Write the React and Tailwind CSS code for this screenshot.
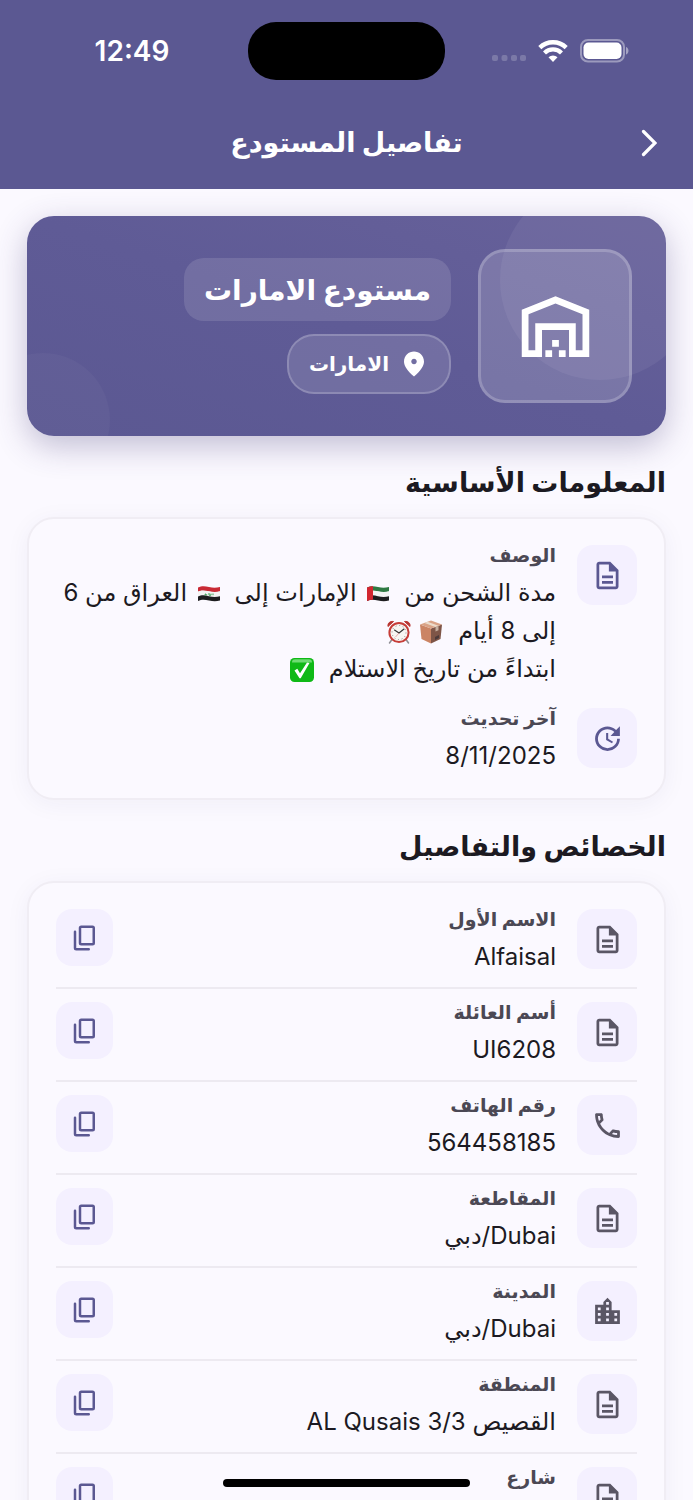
import React from 'react';
import {
  MdOutlineDescription,
  MdOutlineWarehouse,
  MdOutlinePhone,
  MdUpdate,
  MdLocationCity
} from 'react-icons/md';

const fields = [
  { id: 'first', label: 'الاسم الأول', value: 'Alfaisal', icon: MdOutlineDescription },
  { id: 'last', label: 'أسم العائلة', value: 'UI6208', icon: MdOutlineDescription },
  { id: 'phone', label: 'رقم الهاتف', value: '564458185', icon: MdOutlinePhone },
  { id: 'province', label: 'المقاطعة', value: 'Dubai/دبي', icon: MdOutlineDescription },
  { id: 'city', label: 'المدينة', value: 'Dubai/دبي', icon: MdLocationCity },
  { id: 'area', label: 'المنطقة', value: 'القصيص AL Qusais 3/3', icon: MdOutlineDescription },
  { id: 'street', label: 'شارع', value: '', icon: MdOutlineDescription }
];

/* Small inline pictures used inside the description */
const UaeFlag = () => (
  <svg viewBox="0 0 22 16" role="img" aria-label="الإمارات" className="inline-block w-[22px] h-4 ms-2 me-1 align-middle">
    <path d="M0 1.500C4-.5 7 0 11 1s7 1 11 0v4.600c-4 1-7 .8-11 0S4 4 0 5.900z" fill="#2f7a43" />
    <path d="M0 5.500C4 3.700 7 4.500 11 5.300s7 1 11 0v5c-4 1-7 .8-11 0s-7-1.600-11 .3z" fill="#f3f3f3" />
    <path d="M0 10.500c4-1.900 7-1.200 11-.3s7 1 11 0v4.300c-4 1-7 .8-11 0s-7-1.400-11 .5z" fill="#1d1d1f" />
    <path d="M0 1.500C2 .5 4 .2 6 .2v13.500c-2 0-4 .4-6 1.300z" fill="#d22630" />
  </svg>
);

const IraqFlag = () => (
  <svg viewBox="0 0 22 16" role="img" aria-label="العراق" className="inline-block w-[22px] h-4 ms-2 me-1 align-middle">
    <path d="M0 1.500C4-.5 7 0 11 1s7 1 11 0v4.600c-4 1-7 .8-11 0S4 4 0 5.900z" fill="#c92a35" />
    <path d="M0 5.500C4 3.700 7 4.500 11 5.300s7 1 11 0v5c-4 1-7 .8-11 0s-7-1.600-11 .3z" fill="#f3f3f3" />
    <path d="M0 10.500c4-1.900 7-1.200 11-.3s7 1 11 0v4.300c-4 1-7 .8-11 0s-7-1.400-11 .5z" fill="#1d1d1f" />
    <path d="M6.500 8.800h2.700M7.500 7.600v1M11 7v2.200h2V7.600M15 7.500v1.700" stroke="#3e9b55" strokeWidth="1" fill="none" />
  </svg>
);

const PackageIcon = () => (
  <svg viewBox="0 0 24 24" role="img" aria-label="طرد" className="inline-block w-6 h-6 ms-2 me-1 align-middle">
    <path d="M1 4.500 12 8.500v15L2.500 19z" fill="#cb8464" />
    <path d="M23 4.500 12 8.500v15l9.500-4.500z" fill="#7e5547" />
    <path d="M1 4.500 12 .5l11 4-11 4z" fill="#d9a286" />
    <path d="M5.500 2.900 16.500 6.900l3-1.100L8.500 1.800z" fill="#ecdccb" />
    <path d="M16.500 6.900l3-1.100v4.500l-3 1.200z" fill="#c5ae9e" />
    <path d="M16 17l4-2v3l-4 2z" fill="#4c3a3a" />
  </svg>
);

const AlarmIcon = () => (
  <svg viewBox="0 0 24 24" role="img" aria-label="منبه" className="inline-block w-6 h-6 mx-1 align-middle">
    <path d="M5 19.500 2.500 23M19 19.500l2.500 3.500" stroke="#8e8e93" strokeWidth="1.500" strokeLinecap="round" />
    <path d="M1 6.500C.5 3 3 1 6.500 1.500zM23 6.500C23.500 3 21 1 17.500 1.500z" fill="#b8332f" stroke="#b8332f" />
    <circle cx="12" cy="12.500" r="9.600" fill="#f7f5f2" stroke="#c63d38" strokeWidth="2" />
    <circle cx="12" cy="12.500" r="7" fill="none" stroke="#8d8a88" strokeWidth="1" strokeDasharray="1 2.660" />
    <path d="M7.500 10 12 13l5-4" stroke="#333" strokeWidth="1.100" fill="none" strokeLinecap="round" />
    <path d="M12 13 8.500 17" stroke="#d77" strokeWidth=".6" />
  </svg>
);

const CheckIcon = () => (
  <svg viewBox="0 0 24 24" role="img" aria-label="تم" className="inline-block w-6 h-6 ms-2 me-1 align-middle">
    <rect width="24" height="24" rx="4.500" fill="#0fb916" />
    <path d="M2 4.500Q2 1.200 5 1.200h14q3 0 3 3.300z" fill="#6edb72" />
    <path d="M4.500 12.500 7.300 10.800 10 15.300 17 4.500l2.500.5-8.800 15.200H9.500z" fill="#fff" />
  </svg>
);

const CopyIcon = () => (
  <svg viewBox="0 0 24 24" className="w-[30px] h-[30px]" fill="none" stroke="currentColor" strokeWidth="2" aria-hidden="true">
    <rect x="8" y="3" width="11" height="14" rx="1" />
    <path d="M4 7v13q0 1 1 1h10" strokeLinecap="round" />
  </svg>
);

const PinIcon = () => (
  <svg viewBox="0 0 24 24" className="w-[30px] h-[30px]" fill="currentColor" aria-hidden="true">
    <path d="M12 2c-4.200 0-8 3.220-8 8.200 0 3.320 2.670 7.250 8 11.800 5.330-4.550 8-8.480 8-11.800C20 5.220 16.200 2 12 2zm0 10.200c-1.200 0-2.200-1-2.200-2.200s1-2.200 2.200-2.200 2.200 1 2.200 2.200-1 2.200-2.200 2.200z" />
  </svg>
);

const StatusBar = () => (
  <div dir="ltr" className="grid grid-cols-[1fr_197px_1fr] items-center h-[102px] text-white">
    <div className="text-center pl-4 text-[28px] leading-8 font-semibold">12:49</div>
    <div className="h-[58px] rounded-[28px] bg-black" />
    <div className="flex items-center justify-center gap-3 pr-[18px]">
      <svg viewBox="0 0 34 22" className="w-[34px] h-[22px]" fill="#fff" fillOpacity=".2" aria-hidden="true">
        <rect x="0" y="15" width="6" height="6" rx="2" />
        <rect x="9.500" y="15" width="6" height="6" rx="2" />
        <rect x="19" y="15" width="6" height="6" rx="2" />
        <rect x="28" y="15" width="6" height="6" rx="2" />
      </svg>
      <svg viewBox="0 0 30 22" className="w-[30px] h-[22px]" aria-hidden="true">
        <path d="M1.800 7.600a19 19 0 0 1 26.400 0" fill="none" stroke="#fff" strokeWidth="4.400" />
        <path d="M6.500 13a12 12 0 0 1 17 0" fill="none" stroke="#fff" strokeWidth="4.200" />
        <path d="M10.500 17.200a6.500 6.500 0 0 1 9 0L15 22z" fill="#fff" />
      </svg>
      <svg viewBox="0 0 49 24" className="w-[49px] h-6" aria-hidden="true">
        <rect x="1" y="1" width="43" height="21.500" rx="7" fill="none" stroke="#fff" strokeOpacity=".4" strokeWidth="2" />
        <rect x="3.500" y="3.500" width="38" height="16.500" rx="5" fill="#fff" />
        <path d="M46 8c3.300 1 3.300 6.500 0 7.500z" fill="#fff" fillOpacity=".45" />
      </svg>
    </div>
  </div>
);

const IconTile = ({ icon: Icon, className }) => (
  <div className={`flex items-center justify-center shrink-0 w-[60px] h-[60px] rounded-2xl bg-[#f4f0ff] ${className}`}>
    <Icon className="w-[33px] h-[33px]" />
  </div>
);

const Entry = ({ label, children }) => (
  <dl className="flex-1 min-w-0">
    <dt className="text-[19px] leading-[22px] font-bold text-[#4b4854]">{label}</dt>
    {children && <dd className="mt-[7px] text-2xl leading-[38px] text-[#1c1a22]">{children}</dd>}
  </dl>
);

const Section = ({ title, children }) => (
  <section>
    <h2 className="mb-3 text-[27px] leading-[44px] font-bold text-[#1c1a22]">{title}</h2>
    <div className="border-2 border-[#f0edf4] rounded-[27px] bg-[#fbf9ff] px-[27px] pt-[26px] pb-[23px] shadow-[0_4px_24px_rgba(40,30,90,0.05)]">
      {children}
    </div>
  </section>
);

const App = () => {
  const copy = (value) => {
    navigator.clipboard?.writeText(value);
  };

  return (
    <div dir="rtl" className="h-screen flex flex-col overflow-hidden bg-[#fbf9ff] font-['Inter','DejaVu_Sans',sans-serif]">
      {/* Header */}
      <header className="shrink-0 h-[189px] bg-[#5b5892] text-white">
        <StatusBar />
        <div className="grid grid-cols-[60px_1fr_60px] items-center h-[82px] px-[14px]">
          <button type="button" aria-label="رجوع" className="flex items-center justify-center h-14">
            <svg viewBox="0 0 16 28" className="w-4 h-7" fill="none" stroke="currentColor" strokeWidth="3.200" strokeLinecap="round" aria-hidden="true">
              <path d="M2.500 2.500 14 14 2.500 25.500" />
            </svg>
          </button>
          <h1 className="text-center text-[27px] leading-10 font-bold">تفاصيل المستودع</h1>
        </div>
      </header>

      <main className="flex-1 min-h-0 overflow-y-auto [scrollbar-width:none] px-[27px] pt-[27px] pb-10">
        {/* Warehouse card */}
        <div className="relative overflow-hidden flex items-center gap-[27px] px-[34px] py-[33px] rounded-[27px] bg-linear-to-bl from-[#67619a] via-[#5f5b96] to-[#5b5892] text-white shadow-[0_10px_32px_rgba(60,50,110,0.3)]">
          <div className="absolute -top-9 -right-[34px] w-[200px] h-[200px] rounded-full bg-white/6" />
          <div className="absolute -bottom-[51px] -left-[51px] w-[134px] h-[134px] rounded-full bg-white/3" />
          <div className="relative flex items-center justify-center shrink-0 w-[154px] h-[154px] rounded-[27px] border-3 border-white/20 bg-white/16">
            <MdOutlineWarehouse className="w-[81px] h-[81px]" />
          </div>
          <div className="relative flex flex-col items-start gap-[13px]">
            <div className="flex items-center h-[63px] px-5 rounded-[20px] bg-white/12 text-[28px] font-bold whitespace-nowrap">
              مستودع الامارات
            </div>
            <div className="flex items-center gap-[10px] h-[60px] px-5 rounded-[27px] border-2 border-white/20 bg-white/12 text-xl font-bold">
              <PinIcon />
              <span>الامارات</span>
            </div>
          </div>
        </div>

        <div className="flex flex-col gap-[25px] mt-[25px]">
          <Section title="المعلومات الأساسية">
            <div className="flex flex-col gap-5">
              <div className="flex items-start gap-[21px]">
                <IconTile icon={MdOutlineDescription} className="text-[#5b5892]" />
                <Entry label="الوصف">
                  مدة الشحن من <UaeFlag /> الإمارات إلى <IraqFlag /> العراق من 6
                  <br />
                  إلى 8 أيام <PackageIcon />
                  <AlarmIcon />
                  <br />
                  ابتداءً من تاريخ الاستلام <CheckIcon />
                </Entry>
              </div>
              <div className="flex items-start gap-[21px]">
                <IconTile icon={MdUpdate} className="text-[#5b5892]" />
                <Entry label="آخر تحديث">8/11/2025</Entry>
              </div>
            </div>
          </Section>

          <Section title="الخصائص والتفاصيل">
            <ul className="divide-y-2 divide-[#edeaf1]">
              {fields.map(f => (
                <li key={f.id} className="flex items-start gap-[21px] pt-[13px] pb-[11px] first:pt-0">
                  <IconTile icon={f.icon} className="text-[#5a5665]" />
                  <Entry label={f.label}>{f.value}</Entry>
                  <button
                    type="button"
                    aria-label={`نسخ ${f.label}`}
                    onClick={() => copy(f.value)}
                    className="flex items-center justify-center shrink-0 w-[57px] h-[57px] rounded-2xl bg-[#f4f0ff] text-[#5b5892]"
                  >
                    <CopyIcon />
                  </button>
                </li>
              ))}
            </ul>
          </Section>
        </div>
      </main>

      {/* Home indicator */}
      <div className="fixed bottom-[13px] inset-x-0 mx-auto w-[247px] h-2 rounded-full bg-black" />
    </div>
  );
};

export default App;
